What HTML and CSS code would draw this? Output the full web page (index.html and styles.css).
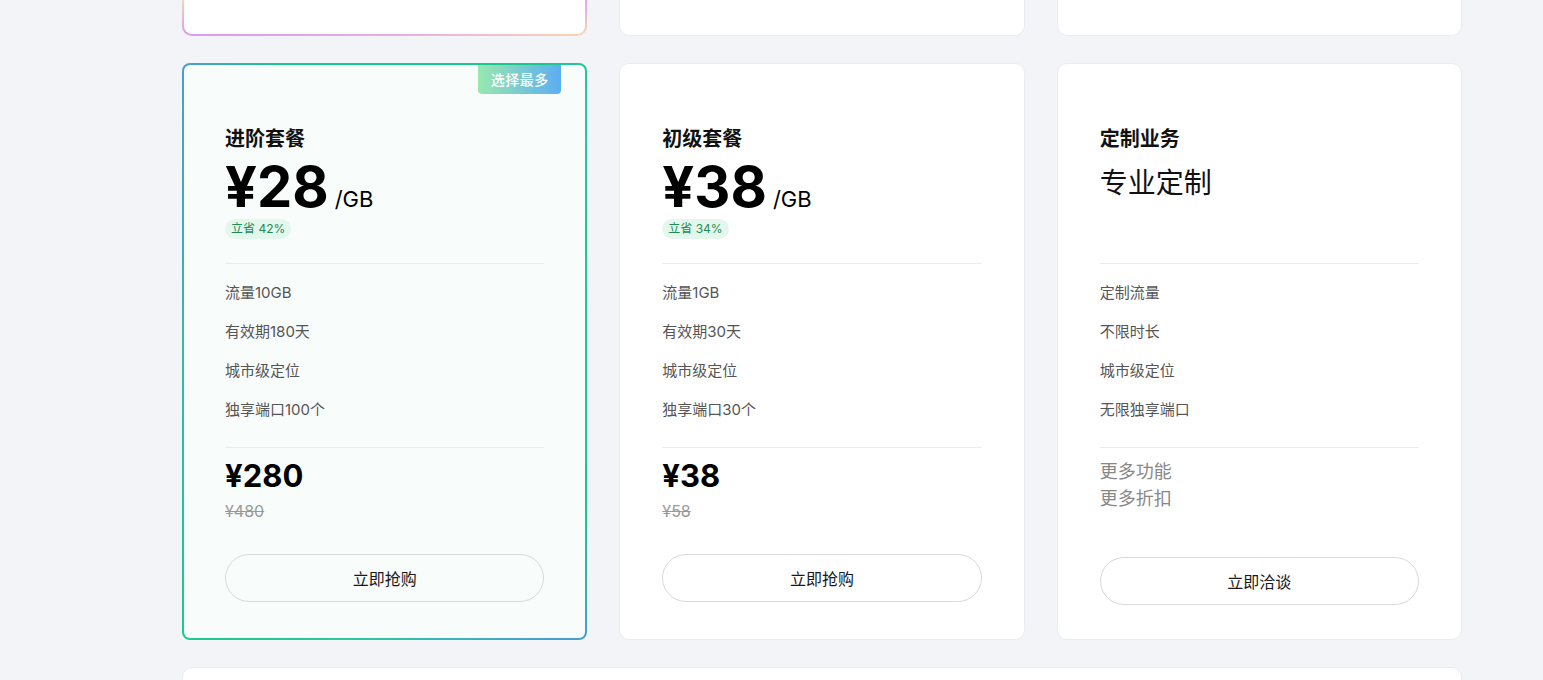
FILE: index.html
```html
<!DOCTYPE html>
<html lang="zh-CN">
<head>
<meta charset="utf-8">
<title>套餐</title>
<link rel="stylesheet" href="styles.css">
</head>
<body>
<div class="page">
  <div class="row row-top">
    <div class="stub stub-hot"></div>
    <div class="stub"></div>
    <div class="stub"></div>
  </div>

  <div class="row row-plans">
    <div class="card card-hot">
      <div class="badge">选择最多</div>
      <div class="title">进阶套餐</div>
      <div class="price-block">
        <div class="price"><span class="amount">¥28</span><span class="unit">/GB</span></div>
        <span class="save">立省 42%</span>
      </div>
      <ul class="features">
        <li>流量10GB</li>
        <li>有效期180天</li>
        <li>城市级定位</li>
        <li>独享端口100个</li>
      </ul>
      <div class="total">
        <div class="now">¥280</div>
        <div class="old">¥480</div>
      </div>
      <button class="btn">立即抢购</button>
    </div>

    <div class="card">
      <div class="title">初级套餐</div>
      <div class="price-block">
        <div class="price"><span class="amount">¥38</span><span class="unit">/GB</span></div>
        <span class="save">立省 34%</span>
      </div>
      <ul class="features">
        <li>流量1GB</li>
        <li>有效期30天</li>
        <li>城市级定位</li>
        <li>独享端口30个</li>
      </ul>
      <div class="total">
        <div class="now">¥38</div>
        <div class="old">¥58</div>
      </div>
      <button class="btn">立即抢购</button>
    </div>

    <div class="card">
      <div class="title">定制业务</div>
      <div class="price-block">
        <div class="custom">专业定制</div>
      </div>
      <ul class="features">
        <li>定制流量</li>
        <li>不限时长</li>
        <li>城市级定位</li>
        <li>无限独享端口</li>
      </ul>
      <div class="total total-more">
        <div class="more">更多功能</div>
        <div class="more">更多折扣</div>
      </div>
      <button class="btn btn-more">立即洽谈</button>
    </div>
  </div>

  <div class="bottom-card"></div>
</div>
</body>
</html>
```

FILE: styles.css
```css
* { box-sizing: border-box; }

html, body {
  margin: 0;
  padding: 0;
  background: #f3f4f8;
  font-family: Inter, "Noto Sans CJK SC", "Noto Sans", sans-serif;
  color: #111;
  overflow: hidden;
}

.page {
  width: 1280px;
  margin-left: 182px;
  display: flex;
  flex-direction: column;
  gap: 27px;
}

.row {
  display: grid;
  grid-template-columns: repeat(3, 1fr);
  column-gap: 32px;
}

.stub {
  height: 36px;
  background: #fff;
  border: 1px solid #e9ecf2;
  border-top: none;
  border-radius: 0 0 10px 10px;
}

.stub-hot {
  border: 2px solid transparent;
  border-top: none;
  background:
    linear-gradient(#fff, #fff) padding-box,
    linear-gradient(to bottom, #fcd3b0, rgba(252, 211, 176, 0)) left top / 3px 100% no-repeat border-box,
    linear-gradient(to bottom, #dca6ee, rgba(220, 166, 238, 0)) right top / 3px 100% no-repeat border-box,
    linear-gradient(to right, #dc98ee 0%, #e4afe6 55%, #fdd4b0 100%) border-box;
}

.card {
  position: relative;
  background: #fff;
  border: 1px solid #e9ecf2;
  border-radius: 10px;
  padding: 61px 42px 34px;
  display: flex;
  flex-direction: column;
}

.card-hot {
  border: 2px solid transparent;
  border-radius: 8px;
  padding: 60px 41px 33px;
  background:
    linear-gradient(#f8fcfb, #f8fcfb) padding-box,
    conic-gradient(#14c98a 0deg, #16c98b 28deg, #2dc3a6 38deg, #19cb8c 70deg, #14c98a 128deg, #4a9dd2 147deg, #2cc7a0 185deg, #19cc8c 215deg, #3bb0bf 280deg, #4a9dd2 325deg, #14c98a 340deg, #14c98a 360deg) border-box;
}

.badge {
  position: absolute;
  top: 0;
  right: 24px;
  width: 83px;
  height: 29px;
  line-height: 29px;
  text-align: center;
  font-size: 14px;
  font-weight: 500;
  letter-spacing: 0.5px;
  color: #fff;
  border-radius: 0 0 4px 4px;
  background: linear-gradient(to right, #98e9ad, #5caef3);
}

.title {
  font-size: 20px;
  line-height: 28px;
  font-weight: 600;
  color: #111;
}

.price-block {
  height: 110px;
  padding-top: 6px;
  display: flex;
  flex-direction: column;
  align-items: flex-start;
}

.price {
  display: flex;
  align-items: baseline;
  height: 56px;
  line-height: 56px;
}

.amount {
  font-size: 56px;
  font-weight: 700;
  color: #000;
}

.unit {
  font-size: 22px;
  margin-left: 6px;
  color: #000;
}

.save {
  margin-top: 4px;
  height: 20px;
  line-height: 20px;
  padding: 0 6px;
  font-size: 12px;
  color: #1e8b55;
  background: #e4f7ec;
  border-radius: 10px;
}

.custom {
  margin-top: 4px;
  font-size: 28px;
  line-height: 40px;
  color: #111;
}

.features {
  list-style: none;
  margin: 0;
  padding: 18px 0 26px;
  border-top: 1px solid #ececee;
  border-bottom: 1px solid #ececee;
  display: flex;
  flex-direction: column;
  gap: 17px;
}

.features li {
  font-size: 15px;
  line-height: 22px;
  color: #555;
}

.total {
  padding-top: 10px;
}

.now {
  font-size: 31px;
  line-height: 36px;
  font-weight: 700;
  color: #000;
}

.old {
  margin-top: 6px;
  font-size: 16px;
  line-height: 22px;
  color: #999;
  text-decoration: line-through;
}

.more {
  font-size: 18px;
  line-height: 27px;
  color: #888;
}

.btn {
  margin-top: 32px;
  width: 100%;
  height: 48px;
  border: 1px solid #d9d9dc;
  border-radius: 24px;
  background: transparent;
  font-family: Inter, "Noto Sans CJK SC", sans-serif;
  font-size: 16px;
  color: #1a1a1a;
}

.btn-more {
  margin-top: 45px;
}

.bottom-card {
  height: 60px;
  background: #fff;
  border: 1px solid #e9ecf2;
  border-radius: 10px;
}
```
